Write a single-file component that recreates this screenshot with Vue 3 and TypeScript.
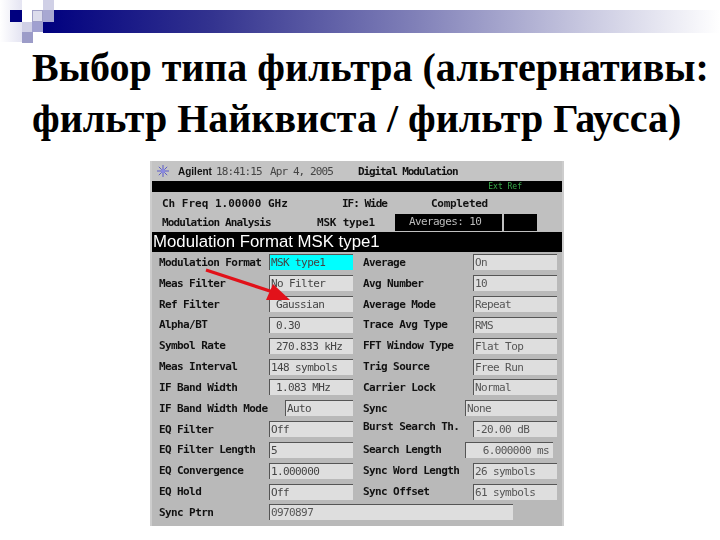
<template>
  <div class="slide">
    <div class="decor">
      <div class="bar"></div>
      <i class="sq s1"></i><i class="sq s2"></i><i class="sq s3"></i><i class="sq s4"></i><i class="sq s4b"></i><i class="sq s5"></i><i class="sq s5b"></i><i class="sq s6"></i>
    </div>
    <h1 class="title">Выбор типа фильтра (альтернативы:<br />фильтр Найквиста / фильтр Гаусса)</h1>
    <div class="screen">
      <div class="top">
        <svg class="logo" width="14" height="14" viewBox="0 0 14 14">
          <g stroke="#5a5ac8" stroke-width="1">
            <path d="M7 1v12M1 7h12M2.8 2.8l8.4 8.4M11.2 2.8l-8.4 8.4" />
          </g>
          <circle cx="7" cy="7" r="2.2" fill="#8a8ae0" />
        </svg>
        <b class="brand">Agilent</b>
        <span class="clock">18:41:15</span>
        <span class="date">Apr 4, 2005</span>
        <b class="mode">Digital Modulation</b>
      </div>
      <div class="blackbar"><span class="ext">Ext Ref</span></div>
      <div class="status">
        <div class="st-row first">
          <b class="st1 big">Ch Freq 1.00000 GHz</b><b class="st2">IF: Wide</b><b class="st3">Completed</b>
        </div>
        <div class="st-row">
          <b class="st1b">Modulation Analysis</b><b class="st2b">MSK type1</b>
          <span class="avg">Averages: 10</span><span class="avg2"></span>
        </div>
      </div>
      <div class="heading">Modulation Format MSK type1</div>
      <div class="params">
        <div v-for="r in rows" :key="r.label" class="cell" :class="r.side">
          <b class="label" :class="r.cls">{{ r.label }}</b>
          <span class="field" :class="[r.fcls, { cyan: r.cyan, pad: r.pad }]">{{ r.value }}</span>
        </div>
      </div>
      <svg class="arrow" width="100" height="40" viewBox="0 0 100 40">
        <path d="M4 4L74 27" stroke="#e2121a" stroke-width="3.2" fill="none" />
        <path d="M88 34L64 34L71 18Z" fill="#e2121a" />
      </svg>
    </div>
  </div>
</template>

<script setup lang="ts">
interface Row {
  label: string
  value: string
  side: string
  cls?: string
  fcls?: string
  cyan?: boolean
  pad?: boolean
}

const L = 'left'
const R = 'right'

const rows: Row[] = [
  { label: 'Modulation Format', value: 'MSK type1', side: L, cyan: true },
  { label: 'Average', value: 'On', side: R },
  { label: 'Meas Filter', value: 'No Filter', side: L },
  { label: 'Avg Number', value: '10', side: R },
  { label: 'Ref Filter', value: 'Gaussian', side: L, pad: true },
  { label: 'Average Mode', value: 'Repeat', side: R },
  { label: 'Alpha/BT', value: '0.30', side: L, pad: true },
  { label: 'Trace Avg Type', value: 'RMS', side: R },
  { label: 'Symbol Rate', value: '270.833 kHz', side: L, pad: true },
  { label: 'FFT Window Type', value: 'Flat Top', side: R },
  { label: 'Meas Interval', value: '148 symbols', side: L },
  { label: 'Trig Source', value: 'Free Run', side: R },
  { label: 'IF Band Width', value: '1.083 MHz', side: L, pad: true },
  { label: 'Carrier Lock', value: 'Normal', side: R },
  { label: 'IF Band Width Mode', value: 'Auto', side: L, cls: 'wide-l' },
  { label: 'Sync', value: 'None', side: R, cls: 'short-l' },
  { label: 'EQ Filter', value: 'Off', side: L },
  { label: 'Burst Search Th.', value: '-20.00 dB', side: R, cls: 'raised' },
  { label: 'EQ Filter Length', value: '5', side: L },
  { label: 'Search Length', value: '6.000000 ms', side: R, cls: 'short-l', fcls: 'end' },
  { label: 'EQ Convergence', value: '1.000000', side: L },
  { label: 'Sync Word Length', value: '26 symbols', side: R },
  { label: 'EQ Hold', value: 'Off', side: L },
  { label: 'Sync Offset', value: '61 symbols', side: R },
  { label: 'Sync Ptrn', value: '0970897', side: 'span' }
]
</script>

<style>
html,
body {
  margin: 0;
  background: #fff;
}
</style>

<style scoped>
.slide {
  position: relative;
  width: 720px;
  height: 540px;
  overflow: hidden;
  background: #fff;
}
.decor {
  position: absolute;
  inset: 0;
}
.bar {
  position: absolute;
  left: 43px;
  top: 10px;
  width: 677px;
  height: 23px;
  background: linear-gradient(90deg, #00007f 0%, #33338f 25%, #8080b8 55%, #c8c8e0 80%, #ffffff 100%);
}
.sq {
  position: absolute;
  display: block;
}
.s1 { left: 0; top: 0; width: 22px; height: 42px; background: linear-gradient(90deg, #fff, #e4e4f2); }
.s2 { left: 10px; top: 10px; width: 12px; height: 12px; background: #00007f; }
.s3 { left: 32px; top: 10px; width: 11px; height: 12px; background: #dcdcec; border: 1px solid #a0a0c8; box-sizing: border-box; }
.s4 { left: 43px; top: 0; width: 11px; height: 10px; background: #d0d0e6; }
.s4b { left: 43px; top: 10px; width: 11px; height: 12px; background: #a8a8d2; }
.s5 { left: 22px; top: 22px; width: 10px; height: 10px; background: #d0d0e6; }
.s5b { left: 32px; top: 22px; width: 11px; height: 10px; background: #a0a0d0; }
.s6 { left: 22px; top: 32px; width: 11px; height: 11px; background: #9c9cc8; }
.title {
  position: relative;
  margin: 0;
  padding: 42px 0 0 32px;
  font-family: "Liberation Serif", serif;
  font-size: 40px;
  font-weight: bold;
  line-height: 51px;
  white-space: nowrap;
  color: #000;
}
.screen {
  position: relative;
  box-sizing: border-box;
  width: 414px;
  height: 365px;
  margin: 17px 0 0 150px;
  padding: 0 2px;
  background: #cdcdcd;
  font-family: "DejaVu Sans Mono", monospace;
  font-size: 11px;
  letter-spacing: -0.6px;
  color: #111;
  filter: blur(0.3px);
}
.top {
  display: flex;
  align-items: center;
  height: 20px;
  padding-left: 4px;
  background: #c4c4c4;
}
.logo {
  flex: none;
  margin-right: 8px;
}
.brand {
  flex: none;
  width: 38px;
  font-family: "Liberation Sans", sans-serif;
  font-size: 10px;
  letter-spacing: 0;
}
.clock {
  flex: none;
  width: 54px;
  color: #444;
  letter-spacing: -0.9px;
}
.date {
  flex: none;
  width: 88px;
  color: #444;
  letter-spacing: -0.9px;
}
.mode {
  letter-spacing: -1.1px;
}
.blackbar {
  display: flex;
  align-items: center;
  justify-content: flex-end;
  height: 11px;
  padding-right: 40px;
  background: #000;
}
.ext {
  font-size: 8px;
  letter-spacing: 0;
  color: #39a84a;
}
.status {
  height: 40px;
  padding-left: 10px;
  background: #c0c0c0;
}
.st-row {
  display: flex;
  align-items: center;
  height: 20px;
}
.st-row.first {
  padding-top: 2px;
  height: 18px;
}
.st1 {
  flex: none;
  width: 180px;
}
.st1.big {
  letter-spacing: 0;
}
.st1b {
  flex: none;
  width: 155px;
  letter-spacing: -0.9px;
}
.st2 {
  flex: none;
  width: 89px;
  letter-spacing: -1px;
}
.st3 {
  letter-spacing: -0.3px;
}
.st2b {
  flex: none;
  width: 78px;
  letter-spacing: -0.2px;
}
.avg {
  box-sizing: border-box;
  width: 107px;
  height: 17px;
  padding-left: 14px;
  line-height: 16px;
  background: #000;
  color: #bbb;
}
.avg2 {
  width: 33px;
  height: 17px;
  margin-left: 2px;
  background: #000;
}
.heading {
  height: 20px;
  padding-left: 1px;
  background: #000;
  color: #fff;
  font-family: "Liberation Sans", sans-serif;
  font-size: 16.8px;
  letter-spacing: 0;
  line-height: 20px;
}
.params {
  display: grid;
  grid-template-columns: 204px 204px;
  grid-auto-rows: 20.83px;
  height: 274px;
  background: #b9b9b9;
}
.cell {
  display: flex;
  align-items: center;
  padding-left: 7px;
}
.cell.span {
  grid-column: 1 / 3;
}
.label {
  flex: 0 0 110px;
  white-space: nowrap;
}
.label.wide-l {
  flex-basis: 126px;
}
.label.short-l {
  flex-basis: 102px;
}
.label.raised {
  position: relative;
  top: -3px;
}
.field {
  box-sizing: border-box;
  flex: 0 0 84px;
  height: 16px;
  padding-left: 1px;
  border-top: 1px solid #555;
  border-left: 1px solid #555;
  background: #dedede;
  color: #555;
  line-height: 15px;
  white-space: nowrap;
}
.cell.left .field {
  color: #444;
}
.field.pad {
  padding-left: 6px;
}
.field.cyan {
  background: #00ffff;
  color: #2a6a80;
}
.field.end {
  padding-right: 4px;
  text-align: right;
  flex-basis: 88px;
}
.cell.span .field {
  flex-basis: 244px;
}
.cell .label.wide-l + .field {
  flex-basis: 68px;
}
.cell .label.short-l + .field {
  flex-basis: 92px;
}
.cell .label.short-l + .field.end {
  flex-basis: 88px;
}
.arrow {
  position: absolute;
  left: 52px;
  top: 105px;
}
</style>
